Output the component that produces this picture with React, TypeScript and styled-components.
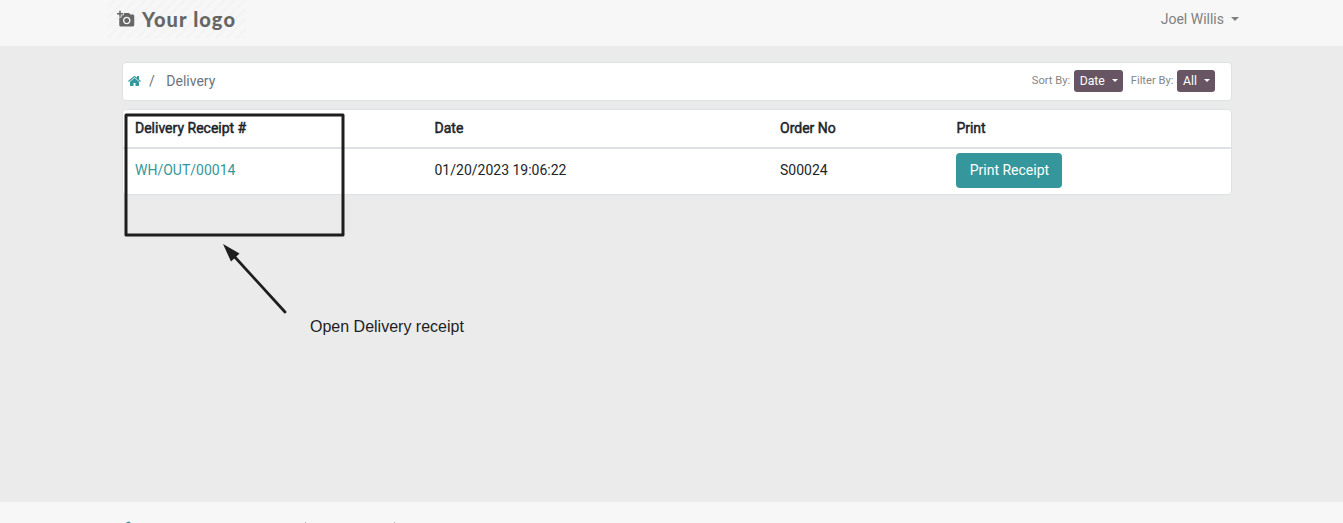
import React from 'react';
import styled, { createGlobalStyle } from 'styled-components';
import { MdAddAPhoto } from 'react-icons/md';

const GlobalStyle = createGlobalStyle`
  *, *::before, *::after { box-sizing: border-box; }
  body {
    margin: 0;
    background: #ebebeb;
    color: #212529;
    font: 14px/21px Roboto, "Liberation Sans", sans-serif;
    overflow: hidden;
  }
`;

const Page = styled.div`
  position: relative;
  display: flex;
  flex-direction: column;
  height: 523px;
  overflow: hidden;
`;

const Header = styled.header`
  display: flex;
  justify-content: space-between;
  align-items: flex-start;
  flex: none;
  height: 46px;
  padding: 0 104px 0 108px;
  background: #f7f7f7;
`;

const Logo = styled.a`
  display: flex;
  align-items: center;
  width: 138px;
  height: 38px;
  padding-left: 9px;
  background: repeating-linear-gradient(135deg, #f7f7f7 0 4px, #f4f4f4 4px 7px);
  color: #666;
  font: 900 20px/38px Lato, sans-serif;
`;

const CameraIcon = styled(MdAddAPhoto)`
  margin-bottom: 1px;
`;

const LogoText = styled.span`
  margin-left: 7px;
  white-space: nowrap;
  letter-spacing: 1.1px;
`;

const UserMenu = styled.div`
  padding-top: 9px;
  color: #808080;
`;

const Caret = styled.span<{ $size: number; $gap: number }>`
  display: inline-block;
  margin-left: ${p => p.$gap}px;
  vertical-align: 3px;
  border: ${p => p.$size}px solid transparent;
  border-top-color: currentColor;
  border-bottom: 0;
`;

const Main = styled.main`
  flex: 1;
  width: 1110px;
  margin-left: 122px;
  padding-top: 16px;
`;

const Card = styled.section`
  background: #fff;
  border: 1px solid #dee2e6;
  border-radius: 4px;
`;

const NavCard = styled(Card)`
  display: flex;
  align-items: center;
  height: 39px;
  margin-bottom: 8px;
  padding: 0 16px 0 5px;
`;

const Crumbs = styled.nav`
  display: flex;
  align-items: center;
  flex: 1;
  color: #6c757d;
`;

const HomeIcon = styled.svg`
  margin-bottom: 2px;
`;

const Slash = styled.span`
  margin: 0 11.5px 0 8px;
`;

const Filters = styled.div`
  display: flex;
  align-items: center;
  padding-bottom: 1px;
`;

const FilterLabel = styled.span`
  margin-right: 3.5px;
  padding-bottom: 2px;
  color: #868686;
  font-size: 11.2px;
`;

const DropButton = styled.button<{ $width: number }>`
  width: ${p => p.$width}px;
  height: 22px;
  padding: 0 0 0 1px;
  border: 0;
  border-radius: 3px;
  background: #685563;
  color: #fff;
  font: 12.25px/22px Roboto, sans-serif;
  & + span { margin-left: 8px; }
`;

const TableCard = styled(Card)`
  height: 86px;
`;

const Row = styled.div<{ $head?: boolean }>`
  display: grid;
  grid-template-columns: 299.5px 345.5px 176.4px 1fr;
  align-items: center;
  height: ${p => (p.$head ? 39 : 43)}px;
  padding-left: 12px;
  -webkit-text-stroke: ${p => (p.$head ? 0.5 : 0)}px currentColor;
  border-bottom: ${p => (p.$head ? '2px solid #dee2e6' : '0')};
`;

const ReceiptLink = styled.a`
  color: #35979c;
`;

const PrintButton = styled.button`
  width: 106px;
  height: 35px;
  padding: 0;
  border: 0;
  border-radius: 4px;
  background: #35979c;
  color: #fff;
  font: 14px/21px Roboto, sans-serif;
`;

const Footer = styled.footer`
  flex: none;
  height: 21px;
  background: #f7f7f7;
`;

const Annotation = styled.svg`
  position: absolute;
  left: 0;
  top: 0;
  pointer-events: none;
`;

const Note = styled.div`
  position: absolute;
  left: 310px;
  top: 317px;
  color: #1e1e1e;
  font: 16px/20px "Liberation Sans", Arial, sans-serif;
  white-space: nowrap;
`;

export default function App() {
  return (
    <Page>
      <GlobalStyle />
      <Header>
        <Logo>
          <CameraIcon size={18} />
          <LogoText>Your logo</LogoText>
        </Logo>
        <UserMenu>Joel Willis<Caret $size={4} $gap={7} /></UserMenu>
      </Header>
      <Main>
        <NavCard>
          <Crumbs>
            <HomeIcon width="13" height="14" viewBox="64 0 1664 1792" fill="#35979c">
              <path transform="translate(64 0)" d="M1408 992v480q0 26-19 45t-45 19h-384v-384h-256v384h-384q-26 0-45-19t-19-45v-480q0-1 .5-3t.5-3l575-474 575 474q1 2 1 6zm223-69l-62 74q-8 9-21 11h-3q-13 0-21-7l-692-577-692 577q-12 8-24 7-13-2-21-11l-62-74q-8-10-7-23.5t11-21.5l719-599q32-26 76-26t76 26l244 204v-195q0-14 9-23t23-9h192q14 0 23 9t9 23v408l219 182q10 8 11 21.5t-7 23.5z" />
            </HomeIcon>
            <Slash>/</Slash>
            <span>Delivery</span>
          </Crumbs>
          <Filters>
            <FilterLabel>Sort By:</FilterLabel>
            <DropButton $width={49}>Date<Caret $size={3} $gap={7} /></DropButton>
            <FilterLabel>Filter By:</FilterLabel>
            <DropButton $width={38}>All<Caret $size={3} $gap={7} /></DropButton>
          </Filters>
        </NavCard>
        <TableCard>
          <Row $head>
            <span>Delivery Receipt #</span>
            <span>Date</span>
            <span>Order No</span>
            <span>Print</span>
          </Row>
          <Row>
            <ReceiptLink>WH/OUT/00014</ReceiptLink>
            <span>01/20/2023 19:06:22</span>
            <span>S00024</span>
            <PrintButton>Print Receipt</PrintButton>
          </Row>
        </TableCard>
      </Main>
      <Footer>
        <svg width="420" height="21" viewBox="0 0 420 21">
          <path d="M126 21q2.5-3 5 0z" fill="#35979c" />
          <path d="M305 20h1v1h-1zM394 20h1v1h-1z" fill="#a9a9b5" />
        </svg>
      </Footer>
      <Annotation width="480" height="340" viewBox="0 0 480 340">
        <rect x="126" y="115" width="217" height="120" fill="none" stroke="#1e1e1e" strokeWidth="3" strokeLinejoin="round" />
        <path d="M233 255L285 312" stroke="#1e1e1e" strokeWidth="2.800" strokeLinecap="round" />
        <path d="M223 244L239.500 253.500L231 261.500z" fill="#1e1e1e" />
      </Annotation>
      <Note>Open Delivery receipt</Note>
    </Page>
  );
}
